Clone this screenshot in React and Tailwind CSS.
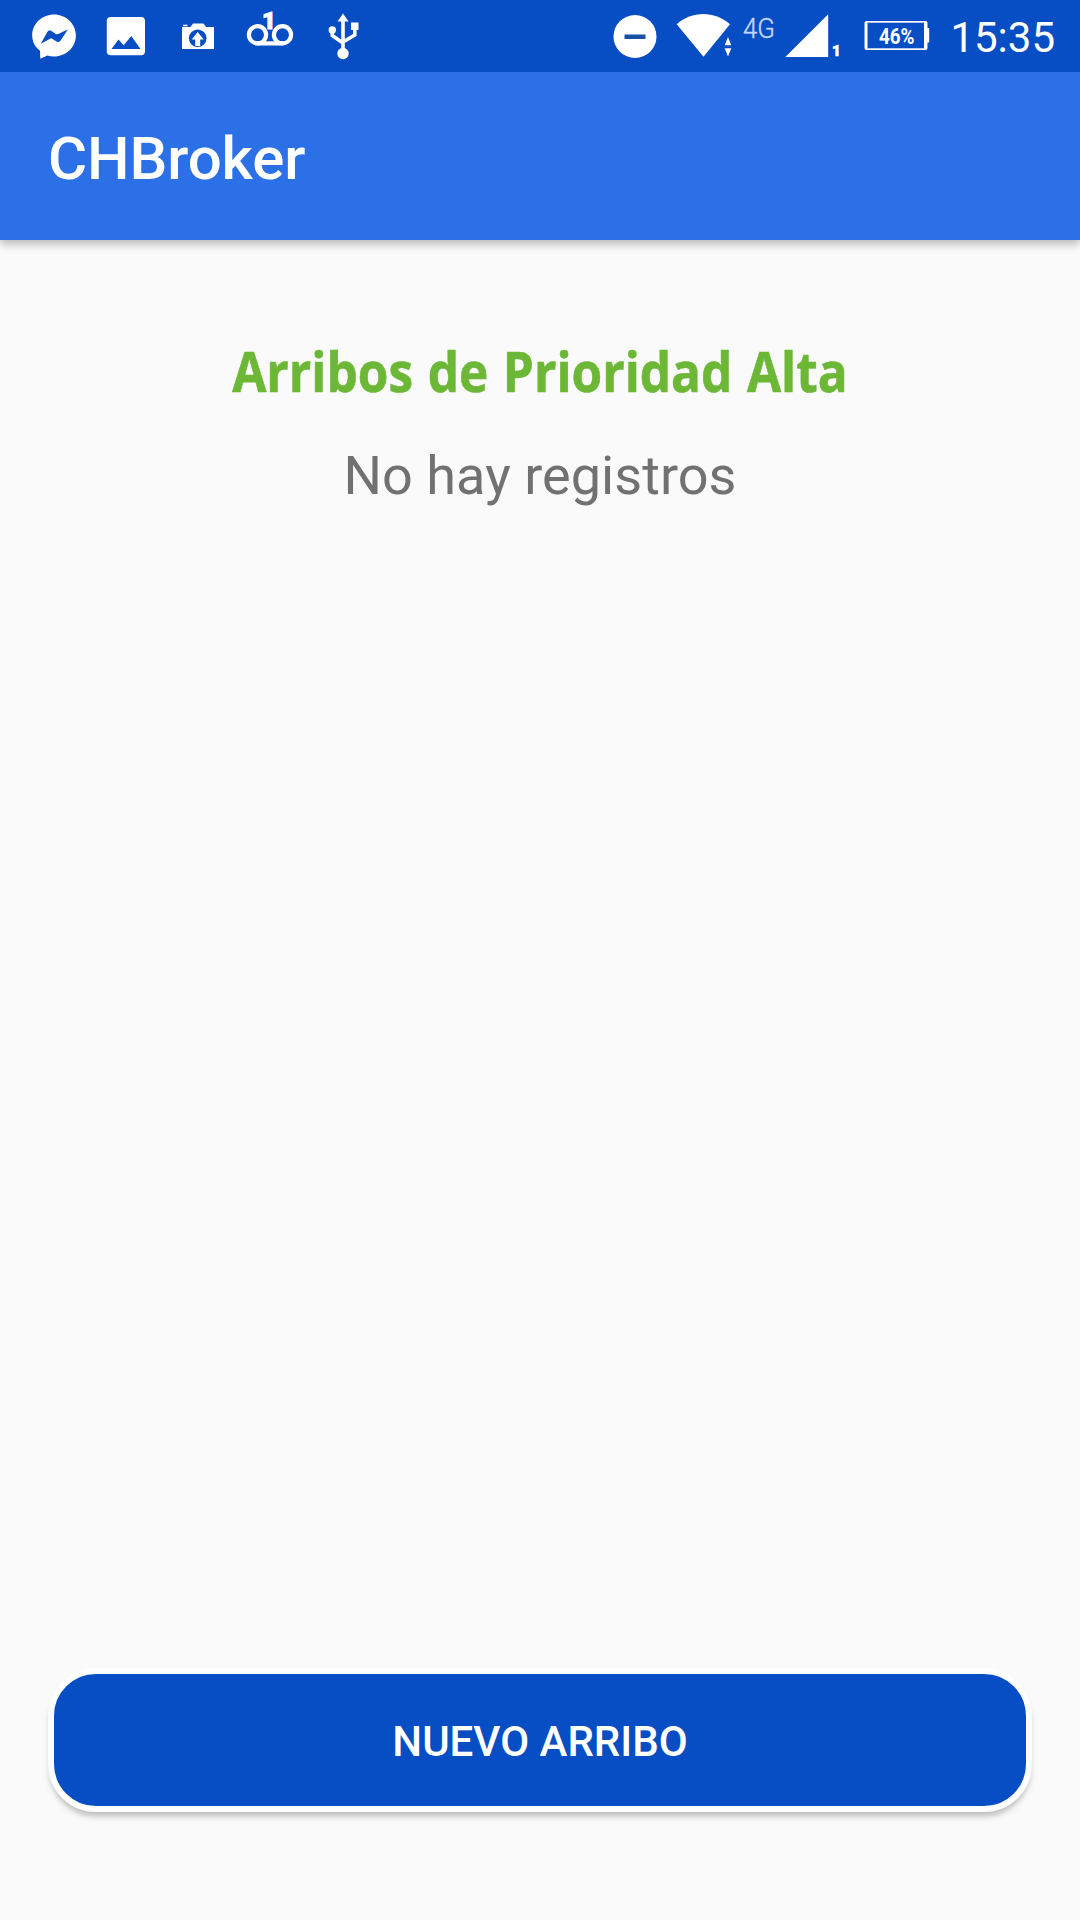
function NotificationIcons() {
  return (
    <div className="flex items-center">
      <svg className="ml-[30px] h-[72px] w-[48px]" viewBox="30 0 48 72" fill="#fff">
        <path d="M54 14.500c-12 0-21.800 9.300-21.800 21 0 6.500 3 11.500 7.800 15.300l.3 8 7-3.300c2.100.6 4.300 1 6.700 1 12 0 21.900-9.300 21.900-21S66 14.500 54 14.500z" />
        <path fill="#074dc3" d="M40.800 43.700l6.300-11.200c1-2 2.600-2.500 4.400-1.500l4.300 2.900c.8.5 1.600.5 2.400 0l9.600-4.300-7 10.700c-1.200 1.800-3 2.100-4.700 1l-4-2.500c-.8-.5-1.600-.5-2.400.1z" />
      </svg>
      <svg className="ml-[24px] h-[72px] w-[48px]" viewBox="102 0 48 72" fill="#fff">
        <rect x="106.800" y="17" width="38.200" height="38.300" rx="4" />
        <path fill="#074dc3" d="M111.500 49l7-9.500 5.200 5.700 7.600-9.200 9.200 13z" />
      </svg>
      <svg className="ml-[24px] h-[72px] w-[48px]" viewBox="174 0 48 72" fill="#fff">
        <path d="M182 27h8.500l2.500-3.500h10.500l2.500 3.500h8v22h-32zM183 24.700h4.500v1.500H183z" />
        <circle cx="197.700" cy="38.300" r="8.800" fill="#074dc3" />
        <path d="M197.700 32l6 7.500h-3.500v6.500h-5v-6.500h-3.500z" />
      </svg>
      <svg className="ml-[24px] h-[72px] w-[48px]" viewBox="246 0 48 72">
        <g fill="none" stroke="#fff" strokeWidth="4.200">
          <circle cx="257.500" cy="34.800" r="8.600" />
          <circle cx="282.500" cy="34.800" r="8.600" />
          <path d="M257 43.400h26" />
        </g>
        <text x="262" y="28.500" fill="#fff" stroke="#fff" strokeWidth="1" fontSize="24" fontWeight="900" fontFamily="Roboto, sans-serif">1</text>
      </svg>
      <svg className="ml-[24px] h-[72px] w-[48px]" viewBox="318 0 48 72" fill="#fff">
        <path d="M343 13.500l5.500 8h-11z" />
        <circle cx="332.300" cy="30" r="3.700" />
        <rect x="351" y="22.500" width="7.500" height="7.500" />
        <circle cx="343" cy="53.500" r="5.700" />
        <path fill="none" stroke="#fff" strokeWidth="3.600" d="M343 19v32M332.300 30v5.500l10.700 7.500M354.800 28v7L343 42" />
      </svg>
    </div>
  );
}

function SystemIcons() {
  return (
    <div className="flex items-center">
      <svg className="h-[72px] w-[44px]" viewBox="613.500 0 44 72">
        <circle cx="635.500" cy="36.500" r="21.500" fill="#fff" />
        <path fill="#1750a4" d="M625 34.500h21v4.500h-21z" />
      </svg>
      <svg className="ml-[18.5px] h-[72px] w-[56px]" viewBox="676 0 56 72" fill="#fff">
        <path d="M676.700 24.200c15.500-13.600 37.500-13.600 53.300 0l-26.500 32.500z" />
        <path stroke="#074dc3" strokeWidth="2" paintOrder="stroke" d="M728 37l3.300 8.300h-6.600zM728 56.500l3.300-8.300h-6.600z" />
      </svg>
      <svg className="ml-[10px] h-[72px] w-[35px]" viewBox="742 0 35 72">
        <text x="743" y="37.500" fill="#c3d6f7" stroke="#c3d6f7" strokeWidth=".4" fontSize="27" fontWeight="300" fontFamily="Roboto, sans-serif" textLength="32" lengthAdjust="spacingAndGlyphs">4G</text>
      </svg>
      <svg className="ml-[8px] h-[72px] w-[58px]" viewBox="785 0 58 72" fill="#fff">
        <path d="M828.200 14.300v42.700H785.300z" />
        <text x="832" y="55.500" stroke="#fff" strokeWidth=".6" fontSize="15" fontWeight="900" fontFamily="Roboto, sans-serif">1</text>
      </svg>
      <svg className="ml-[20px] h-[72px] w-[68px]" viewBox="863 0 68 72">
        <rect x="864.500" y="21" width="63" height="29" rx="2" fill="#fff" />
        <rect x="867.500" y="22.700" width="56.500" height="25.600" fill="#074dc3" />
        <rect x="927" y="28" width="2.200" height="14.500" fill="#fff" />
        <text x="879" y="44" fill="#fff" fontSize="22" fontWeight="700" fontFamily="Roboto, sans-serif" textLength="35.500" lengthAdjust="spacingAndGlyphs">46%</text>
      </svg>
      <span className="ml-[19.5px] mr-[25px] pt-[3px] text-[42px] leading-none">15:35</span>
    </div>
  );
}

export default function App() {
  return (
    <div className="flex h-[1920px] w-[1080px] flex-col overflow-hidden bg-[#fafafa] font-['Roboto',sans-serif]">
      <div className="z-10 flex h-[72px] shrink-0 items-center justify-between bg-[#074dc3] text-white">
        <NotificationIcons />
        <SystemIcons />
      </div>

      <header className="flex h-[168px] shrink-0 items-center bg-[#2b70e7] pl-[48px] pt-[5px] shadow-[0_4px_9px_rgba(0,0,0,0.28)]">
        <h1 className="text-[60px] font-medium leading-none tracking-[-0.1px] text-white">CHBroker</h1>
      </header>

      <main className="flex flex-1 flex-col items-center px-[48px] pb-[108px] pt-[96px]">
        <h2 className="scale-x-90 whitespace-nowrap font-['Open_Sans',sans-serif] text-[55px] font-bold leading-[70px] text-[#6cb836] [word-spacing:2px] [-webkit-text-stroke:0.6px_#6cb836]">
          Arribos de Prioridad Alta
        </h2>
        <p className="mt-[35px] text-[54px] leading-[70px] tracking-[0.05px] text-[#717171]">No hay registros</p>
        <button className="mt-auto h-[144px] w-full rounded-[48px] border-[6px] border-white bg-[#074dc3] pt-[2px] text-[42px] font-medium text-white shadow-[0_6px_6px_-2px_rgba(0,0,0,0.26)]">
          NUEVO ARRIBO
        </button>
      </main>
    </div>
  );
}
